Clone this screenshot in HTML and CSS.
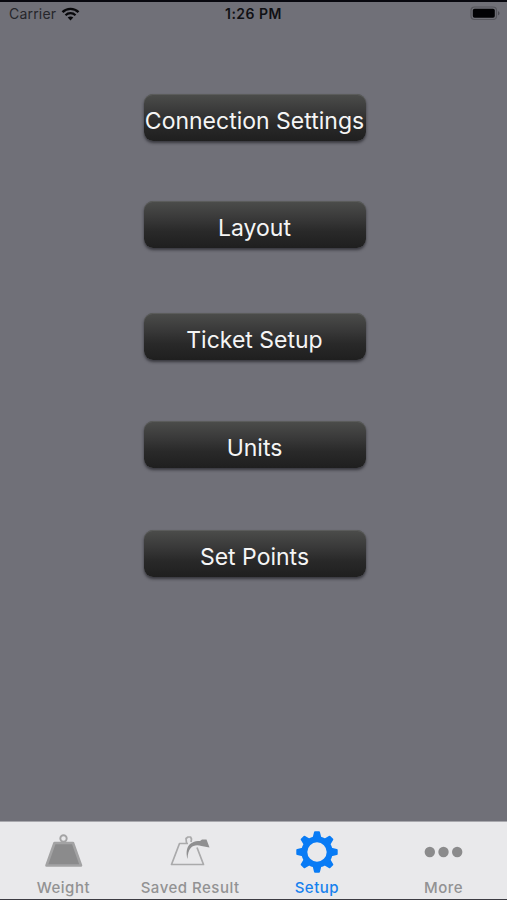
FILE: index.html
```html
<!DOCTYPE html>
<html lang="en">
<head>
  <meta charset="UTF-8">
  <meta name="viewport" content="width=device-width, initial-scale=1.0">
  <title>Setup</title>
  <link rel="stylesheet" href="styles.css">
</head>
<body>
  <header class="status-bar">
    <div class="status-left">
      <span class="carrier">Carrier</span>
      <svg class="wifi" width="19" height="14" viewBox="0 0 18 14">
        <path d="M1 5.2C5.4.7 12.6.7 17 5.2" fill="none" stroke="#08080b" stroke-width="2.4"/>
        <path d="M4 8.3C6.8 5.5 11.2 5.5 14 8.3" fill="none" stroke="#08080b" stroke-width="2.2"/>
        <path d="M6.2 10.6C7.8 9 10.2 9 11.8 10.6L9 13.6z" fill="#08080b"/>
      </svg>
    </div>
    <span class="time">1:26 PM</span>
    <div class="status-right">
      <svg width="31" height="15" viewBox="0 0 31 15">
        <rect x="1" y="1" width="25.5" height="12.5" rx="3.5" fill="none" stroke="#55555c" stroke-width="1.2"/>
        <rect x="2.8" y="2.8" width="22" height="9" rx="1.8" fill="#020205"/>
        <path d="M28 5.2c2 .5 2 3.6 0 4.1z" fill="#4b4b52"/>
      </svg>
    </div>
  </header>

  <main class="menu">
    <button class="menu-btn connection">Connection Settings</button>
    <button class="menu-btn layout">Layout</button>
    <button class="menu-btn ticket">Ticket Setup</button>
    <button class="menu-btn units">Units</button>
    <button class="menu-btn points">Set Points</button>
  </main>

  <nav class="tab-bar">
    <a class="tab">
      <svg class="tab-icon" width="44" height="44" viewBox="0 0 44 44">
        <circle cx="22.500" cy="8.500" r="3.200" fill="none" stroke="#a3a3a4" stroke-width="1.900"/>
        <path d="M13.500 13h18.500l8 22.500h-34.500z" fill="#8b8b8c" stroke="#a3a3a4" stroke-width="2.600" stroke-linejoin="round"/>
      </svg>
      <span>Weight</span>
    </a>
    <a class="tab">
      <svg class="tab-icon" width="44" height="44" viewBox="0 0 44 44">
        <g fill="none" stroke="#aaaaab" stroke-width="1.700" stroke-linejoin="round">
          <path d="M20 13.500h-8.500L3.500 34.500h32L29 17.500"/>
          <path d="M18.500 13l-.5-4.500 2-1.500h2.500l1 2-.5 3"/>
        </g>
        <path d="M19.500 29C17 19 20 11 32 11l2-1.500h4.500l3 8-8-1.500C26.500 14 20 16 19.500 29z" fill="#8f8f90"/>
      </svg>
      <span>Saved Result</span>
    </a>
    <a class="tab active">
      <svg class="tab-icon" width="44" height="44" viewBox="-22 -22 44 44">
        <defs>
          <path id="tooth" d="M-4.300-14.500L-3-19.800Q-2.800-20.700-2-20.700H2Q2.800-20.700 3-19.800L4.300-14.500z"/>
        </defs>
        <g fill="#087bf5">
          <use href="#tooth"/>
          <use href="#tooth" transform="rotate(45)"/>
          <use href="#tooth" transform="rotate(90)"/>
          <use href="#tooth" transform="rotate(135)"/>
          <use href="#tooth" transform="rotate(180)"/>
          <use href="#tooth" transform="rotate(225)"/>
          <use href="#tooth" transform="rotate(270)"/>
          <use href="#tooth" transform="rotate(315)"/>
        </g>
        <circle r="12.700" fill="none" stroke="#087bf5" stroke-width="6"/>
      </svg>
      <span>Setup</span>
    </a>
    <a class="tab">
      <svg class="tab-icon" width="44" height="44" viewBox="0 0 44 44">
        <g fill="#8b8b8c">
          <circle cx="7.800" cy="22" r="5.200"/>
          <circle cx="21.500" cy="22" r="5.200"/>
          <circle cx="35.200" cy="22" r="5.200"/>
        </g>
      </svg>
      <span>More</span>
    </a>
  </nav>
</body>
</html>
```
FILE: styles.css
```css
* {
  box-sizing: border-box;
}

body {
  display: flex;
  flex-direction: column;
  height: 900px;
  margin: 0;
  border-top: 2px solid #08080f;
  border-bottom: 1px solid #3c3b42;
  background-color: #707078;
  font-family: Inter, "Liberation Sans", sans-serif;
  overflow: hidden;
}

/* Status bar */
.status-bar {
  display: grid;
  grid-template-columns: 1fr auto 1fr;
  align-items: center;
  height: 23px;
  padding: 0 6px 0 9px;
  color: #101014;
  font-size: 14px;
}

.status-left {
  display: flex;
  align-items: center;
  gap: 5px;
}

.carrier {
  color: #26262b;
  letter-spacing: 0.2px;
}

.time {
  margin-right: 3px;
  font-weight: 600;
  letter-spacing: 0.5px;
}

.status-right {
  display: flex;
  justify-content: flex-end;
}

/* Menu buttons */
.menu {
  display: flex;
  flex: 1;
  flex-direction: column;
  align-items: center;
  padding: 69px 0 0 2px;
}

.menu-btn {
  width: 222px;
  height: 47px;
  padding: 7px 0 0;
  border: none;
  border-radius: 9px;
  background: linear-gradient(#4c4d4b, #3a3a3a 35%, #292929 65%, #1f1f1f);
  box-shadow: 0 2px 3px rgba(25, 25, 30, 0.65), inset 0 1px 0 #5b5c5b;
  color: #f5f5f5;
  font-family: inherit;
  font-size: 23px;
  white-space: nowrap;
}

.layout {
  margin-top: 60px;
}

.ticket {
  margin-top: 65px;
}

.units {
  margin-top: 61px;
}

.points {
  margin-top: 62px;
}

/* Bottom tabs */
.tab-bar {
  display: grid;
  grid-template-columns: repeat(4, 1fr);
  height: 78px;
  border-top: 1px solid #a8a8ad;
  background-color: #e9e9eb;
}

.tab {
  display: flex;
  flex-direction: column;
  align-items: center;
  padding-top: 8px;
  color: #929293;
  font-size: 15px;
  font-weight: 500;
  line-height: 18px;
  letter-spacing: 0.5px;
}

.tab-icon {
  margin-bottom: 5px;
}

.active {
  color: #1681ee;
}
```
